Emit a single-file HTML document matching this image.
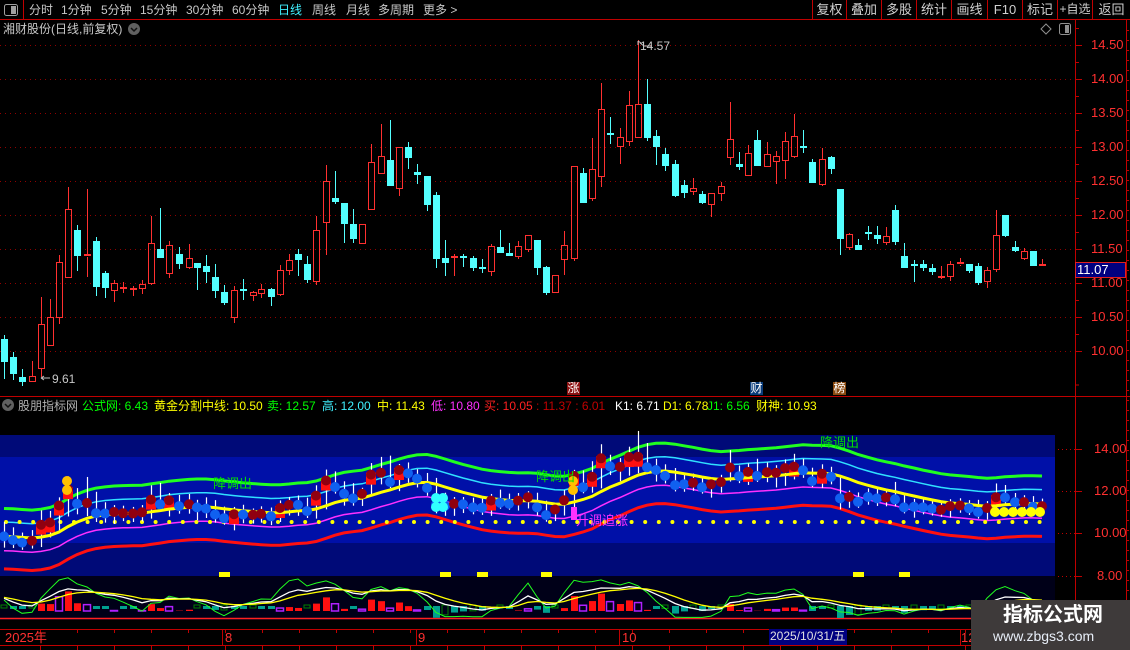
<!DOCTYPE html>
<html><head><meta charset="utf-8">
<style>
*{margin:0;padding:0;box-sizing:border-box}
body{width:1130px;height:650px;background:#000;overflow:hidden;position:relative;font-family:"Liberation Sans","Noto Sans CJK SC",sans-serif;font-size:12px;color:#c8c8c8}
.t{position:absolute;white-space:nowrap;line-height:14px}
svg{position:absolute;left:0;top:0}
.btn{position:absolute;top:0;height:20px;line-height:19px;text-align:center;border-left:1px solid #c00000;color:#d0d0d0;font-size:13px}
.ax{font-size:13px;color:#ff3030}
</style></head><body>
<svg id="s" width="1130" height="650"></svg>

<div class="t" style="left:29px;top:3px">分时</div>
<div class="t" style="left:61px;top:3px">1分钟</div>
<div class="t" style="left:101px;top:3px">5分钟</div>
<div class="t" style="left:140px;top:3px">15分钟</div>
<div class="t" style="left:186px;top:3px">30分钟</div>
<div class="t" style="left:232px;top:3px">60分钟</div>
<div class="t" style="left:278px;top:3px;color:#40f0ff">日线</div>
<div class="t" style="left:312px;top:3px">周线</div>
<div class="t" style="left:346px;top:3px">月线</div>
<div class="t" style="left:378px;top:3px">多周期</div>
<div class="t" style="left:423px;top:3px">更多 &gt;</div>

<div class="btn" style="left:812px;width:34px">复权</div>
<div class="btn" style="left:846px;width:35px">叠加</div>
<div class="btn" style="left:881px;width:35px">多股</div>
<div class="btn" style="left:916px;width:35px">统计</div>
<div class="btn" style="left:951px;width:36px">画线</div>
<div class="btn" style="left:987px;width:35px">F10</div>
<div class="btn" style="left:1022px;width:35px">标记</div>
<div class="btn" style="left:1057px;width:35px;font-size:12px">+自选</div>
<div class="btn" style="left:1092px;width:38px">返回</div>

<div class="t" style="left:3px;top:22px">湘财股份(日线,前复权)</div>
<div class="t" style="left:640px;top:39px">14.57</div>
<div class="t" style="left:52px;top:372px">9.61</div>

<div class="t" style="left:18px;top:399px;color:#b0b0b0">股朋指标网</div>
<div class="t" style="left:82px;top:399px;color:#00ff00">公式网: 6.43</div>
<div class="t" style="left:154px;top:399px;color:#ffff00">黄金分割中线: 10.50</div>
<div class="t" style="left:267px;top:399px;color:#00ff00">卖: 12.57</div>
<div class="t" style="left:322px;top:399px;color:#40f0ff">高: 12.00</div>
<div class="t" style="left:377px;top:399px;color:#ffff00">中: 11.43</div>
<div class="t" style="left:431px;top:399px;color:#ff30ff">低: 10.80</div>
<div class="t" style="left:484px;top:399px;color:#ff2020">买: 10.05 <span style="color:#c00000">: 11.37 : 6.01</span></div>
<div class="t" style="left:615px;top:399px;color:#fff">K1: 6.71</div>
<div class="t" style="left:663px;top:399px;color:#ffff00">D1: 6.78</div>
<div class="t" style="left:707px;top:399px;color:#00ff00">J1: 6.56</div>
<div class="t" style="left:756px;top:399px;color:#ffff00">财神: 10.93</div>

<div class="t" style="left:213px;top:477px;color:#00e000;font-size:13px">降调出</div>
<div class="t" style="left:536px;top:470px;color:#00e000;font-size:13px">降调出</div>
<div class="t" style="left:820px;top:436px;color:#00e000;font-size:13px">降调出</div>
<div class="t" style="left:576px;top:514px;color:#ff30ff;font-size:13px">升调追涨</div>

<div class="t ax" style="left:1091px;top:38px">14.50</div>
<div class="t ax" style="left:1091px;top:72px">14.00</div>
<div class="t ax" style="left:1091px;top:106px">13.50</div>
<div class="t ax" style="left:1091px;top:140px">13.00</div>
<div class="t ax" style="left:1091px;top:174px">12.50</div>
<div class="t ax" style="left:1091px;top:208px">12.00</div>
<div class="t ax" style="left:1091px;top:242px">11.50</div>
<div class="t ax" style="left:1091px;top:276px">11.00</div>
<div class="t ax" style="left:1091px;top:310px">10.50</div>
<div class="t ax" style="left:1091px;top:344px">10.00</div>
<div style="position:absolute;left:1075px;top:262px;width:51px;height:16px;background:#000080;border:1px solid #e02020;color:#fff;line-height:14px;padding-left:1px;font-size:13px">11.07</div>

<div class="t ax" style="left:1094px;top:442px">14.00</div>
<div class="t ax" style="left:1094px;top:484px">12.00</div>
<div class="t ax" style="left:1094px;top:526px">10.00</div>
<div class="t ax" style="left:1097px;top:569px">8.00</div>

<div style="position:absolute;left:567px;top:382px;width:13px;height:13px;background:#8b1010;color:#fff;font-size:12px;line-height:13px;text-align:center">涨</div>
<div style="position:absolute;left:750px;top:382px;width:13px;height:13px;background:#0a3c7a;color:#fff;font-size:12px;line-height:13px;text-align:center">财</div>
<div style="position:absolute;left:833px;top:382px;width:13px;height:13px;background:#8b4a10;color:#fff;font-size:12px;line-height:13px;text-align:center">榜</div>

<div class="t ax" style="left:5px;top:631px">2025年</div>
<div class="t ax" style="left:225px;top:631px">8</div>
<div class="t ax" style="left:418px;top:631px">9</div>
<div class="t ax" style="left:622px;top:631px">10</div>
<div style="position:absolute;left:769px;top:629px;width:78px;height:16px;background:#000080;color:#e0e0e0;line-height:15px;padding-left:1px;white-space:nowrap;overflow:hidden;font-size:12px">2025/10/31/五</div>
<div class="t ax" style="left:961px;top:631px">12</div>

<div style="position:absolute;left:971px;top:600px;width:159px;height:50px;background:#3e3a3a"></div>
<div class="t" style="left:1003px;top:603px;color:#fff;font-size:20px;font-weight:bold;line-height:24px">指标公式网</div>
<div class="t" style="left:993px;top:628px;color:#e8eef8;font-size:14px;line-height:16px">www.zbgs3.com</div>

<script>
var D=[[4,339,362,335,379,'c'],[13,357,374,352,380,'c'],[22,377,382,369,386,'c'],[32,376,382,361,382,'r'],[41,324,369,297,377,'r'],[50,317,346,299,346,'r'],[59,262,318,255,324,'r'],[68,209,278,187,278,'r'],[77,230,256,225,271,'c'],[87,254,257,189,277,'r'],[96,241,287,237,296,'c'],[105,273,288,271,298,'c'],[114,283,291,280,302,'r'],[123,287,289,282,293,'r'],[133,288,290,286,296,'r'],[142,284,289,280,294,'r'],[151,243,284,216,285,'r'],[160,249,258,208,258,'c'],[169,245,274,241,278,'r'],[179,254,264,247,269,'c'],[189,258,268,244,269,'r'],[197,263,268,263,290,'c'],[206,266,272,255,283,'c'],[215,277,291,264,298,'c'],[224,292,303,285,305,'c'],[234,290,318,286,323,'r'],[243,289,291,279,300,'c'],[253,292,296,291,301,'r'],[261,289,294,284,298,'r'],[271,289,297,288,306,'c'],[280,270,295,265,296,'r'],[289,260,271,254,275,'r'],[298,254,260,249,276,'c'],[307,264,280,256,283,'c'],[316,230,282,216,285,'r'],[326,181,223,165,255,'r'],[335,198,202,171,204,'c'],[344,203,224,203,243,'c'],[353,224,239,209,243,'c'],[362,224,244,224,244,'r'],[371,162,210,144,210,'r'],[381,156,174,124,174,'r'],[390,160,186,120,186,'c'],[399,147,189,147,196,'r'],[408,147,158,142,169,'c'],[417,172,175,164,184,'c'],[427,176,205,176,211,'c'],[436,195,259,192,268,'c'],[445,258,263,240,276,'c'],[454,256,258,254,276,'r'],[463,256,258,254,267,'c'],[473,258,268,256,271,'c'],[482,267,269,259,273,'c'],[491,246,272,244,276,'r'],[500,247,253,230,253,'c'],[509,253,256,243,256,'c'],[518,246,257,241,259,'r'],[528,235,250,235,252,'r'],[537,240,268,240,275,'c'],[546,267,293,266,295,'c'],[555,275,293,275,293,'r'],[564,245,260,231,275,'r'],[574,166,259,166,261,'r'],[583,173,203,168,203,'c'],[592,169,199,138,201,'r'],[601,109,177,83,187,'r'],[610,133,135,117,144,'c'],[620,137,147,128,164,'r'],[629,105,142,91,146,'r'],[638,104,138,40,138,'r'],[647,104,138,79,141,'c'],[656,136,147,130,165,'c'],[665,154,166,148,171,'c'],[675,164,196,160,197,'c'],[684,185,193,180,198,'c'],[693,188,192,178,195,'r'],[702,194,203,191,204,'c'],[711,193,205,193,217,'r'],[721,186,194,182,201,'r'],[730,139,158,102,165,'r'],[739,164,167,152,170,'c'],[748,153,176,145,176,'r'],[757,140,166,130,166,'c'],[767,154,167,142,167,'r'],[776,156,162,151,184,'r'],[785,141,161,132,179,'r'],[794,136,157,114,158,'r'],[803,146,148,130,153,'c'],[812,162,183,159,183,'c'],[822,159,185,148,186,'r'],[831,157,169,156,174,'c'],[840,189,239,189,255,'c'],[849,234,248,233,250,'r'],[858,245,250,239,250,'c'],[868,232,234,226,240,'c'],[877,235,239,226,244,'c'],[886,236,243,227,245,'r'],[895,210,242,205,245,'c'],[904,256,268,243,268,'c'],[914,264,266,260,282,'c'],[923,264,268,260,271,'c'],[932,268,272,264,275,'c'],[941,276,278,266,279,'r'],[950,264,277,261,281,'r'],[960,262,265,258,266,'r'],[969,264,271,264,273,'c'],[978,266,283,263,285,'c'],[987,270,282,267,288,'r'],[996,235,270,210,272,'r'],[1005,215,236,215,237,'c'],[1015,247,251,241,252,'c'],[1024,251,259,248,260,'r'],[1033,251,266,251,266,'c'],[1042,264,266,259,266,'r']];
var h=[];
function R(x,y,w,hh,f){h.push('<rect x="'+x+'" y="'+y+'" width="'+w+'" height="'+hh+'" fill="'+f+'"/>');}
function L(x1,y1,x2,y2,c,w,da){h.push('<line x1="'+x1+'" y1="'+y1+'" x2="'+x2+'" y2="'+y2+'" stroke="'+c+'" stroke-width="'+(w||1)+'"'+(da?' stroke-dasharray="'+da+'"':'')+'/>');}
function P(pts,c,w){h.push('<polyline fill="none" stroke="'+c+'" stroke-width="'+w+'" points="'+pts.map(function(p){return p[0]+','+p[1].toFixed(1)}).join(' ')+'"/>');}
L(0,19.5,1130,19.5,'#c00000');L(23.5,0,23.5,19,'#c00000');
L(1075.5,20,1075.5,630,'#c00000');L(1126.5,20,1126.5,650,'#c00000');
L(0,396.5,1130,396.5,'#c00000');L(0,629.5,1130,629.5,'#c00000');L(0,645.5,1130,645.5,'#c00000');
h.push('<rect x="4.5" y="4.5" width="13" height="11" rx="2" fill="none" stroke="#a0a0a0"/><rect x="11" y="6" width="5" height="8" fill="#a0a0a0"/>');
h.push('<circle cx="134" cy="29" r="6" fill="#606060"/><path d="M131 28l3 3 3-3" stroke="#111" fill="none" stroke-width="1.5"/>');
h.push('<circle cx="8" cy="405" r="6" fill="#606060"/><path d="M5 404l3 3 3-3" stroke="#111" fill="none" stroke-width="1.5"/>');
h.push('<path d="M1046 24l5 5-5 5-5-5z" fill="none" stroke="#909090"/><rect x="1059.5" y="23.5" width="11" height="11" rx="2" fill="none" stroke="#909090"/><rect x="1065" y="25" width="4" height="8" fill="#909090"/>');
for(var k=0;k<=9;k++){var y=351-k*34+0.5;L(0,y,1075,y,'#900000',1,'1 4');L(1075,y,1082,y,'#c00000');L(1075,y-17,1079,y-17,'#c00000');}
L(1075,385,1079,385,'#c00000');
[449,491,533,576].forEach(function(y){L(1058,y+.5,1075,y+.5,'#c00000',1,'1 3');L(1075,y+.5,1082,y+.5,'#c00000');});
for(var y=30;y<640;y+=10){L(1126,y+.5,1129,y+.5,'#c00000');}
[222,416,619,770,960].forEach(function(x){L(x+.5,630,x+.5,645,'#c00000');});
for(var x=40;x<1075;x+=37){L(x+.5,645,x+.5,650,'#c00000');L(x+.5,630,x+.5,633,'#c00000');}
D.forEach(function(d){var x=d[0];
 if(d[5]=='c'){L(x+.5,d[3],x+.5,d[4],'#54ffff');R(x-3,d[1],7,Math.max(2,d[2]-d[1]),'#54ffff');}
 else{L(x+.5,d[3],x+.5,d[1],'#ff3030');L(x+.5,d[2],x+.5,d[4],'#ff3030');
  if(d[2]-d[1]<=3){R(x-3,d[1],7,2,'#ff3030');}else h.push('<rect x="'+(x-2.5)+'" y="'+(d[1]+.5)+'" width="6" height="'+(d[2]-d[1]-1)+'" fill="none" stroke="#ff3030"/>');}
});
h.push('<path d="M41 378h9M41 378l3-2M41 378l3 2" stroke="#c0c0c0" fill="none"/><path d="M638 41v4M638 41l3 2M640 43l4 3h8" stroke="#c0c0c0" fill="none"/>');
R(0,435,1055,141,'#000a78');R(0,457,1055,86,'#0010a8');R(0,576,1055,44,'#000018');
var pc=D.map(function(d){return 10+(351-(d[5]=='r'?d[1]:d[2]))/68;});
var ph=D.map(function(d){return 10+(351-d[3])/68;}),pl=D.map(function(d){return 10+(351-d[4])/68;});
function iy(p){return 533-(p-10)*21;}
var e=[],v=pc[0];pc.forEach(function(p){v+=(p-v)*0.22;e.push(v);});
var e2=[];v=e[0];e.forEach(function(p){v+=(p-v)*0.4;e2.push(v);});
function line(off,c,w){P(D.map(function(d,i){return [d[0],iy(e2[i]+off)];}),c,w);}
line(-1.55,'#ff1010',3);line(-0.68,'#ff30ff',1.5);line(0.68,'#30e0ff',1.5);line(1.33,'#20ff20',3);
for(var x=6;x<1050;x+=13.6){h.push('<circle cx="'+x.toFixed(1)+'" cy="522" r="2" fill="#ffff00"/>');}
D.forEach(function(d,i){var x=d[0],y=iy(pc[i]);
 L(x+.5,iy(ph[i])-6,x+.5,iy(pl[i])+6,'#ffffff',1.2);
 if(d[5]=='r'&&d[2]-d[1]>20)R(x-5,y-2,10,12,'#ff1010');});
line(0,'#ffff00',3);
D.forEach(function(d,i){var x=d[0],y=iy(pc[i]);
 h.push('<circle cx="'+x+'" cy="'+y.toFixed(1)+'" r="5" fill="'+(d[5]=='r'?'#900010':'#1060f0')+'"/>');});
[995,1004,1013,1022,1031,1040].forEach(function(x){h.push('<circle cx="'+x+'" cy="512" r="5" fill="#ffff00"/>');});
[67,573].forEach(function(x){h.push('<circle cx="'+x+'" cy="481" r="5" fill="#ffc000"/><circle cx="'+x+'" cy="490" r="5" fill="#ffc000"/>');});
[436,443].forEach(function(x){h.push('<circle cx="'+x+'" cy="498" r="5" fill="#30ffff"/><circle cx="'+x+'" cy="507" r="5" fill="#30ffff"/>');});
R(571,507,6,13,'#ff30ff');
[219,440,477,541,853,899].forEach(function(x){R(x,572,11,5,'#ffff00');});
var K=[],Dd=[],J=[],kv=50,dv=50;
pc.forEach(function(p,i){var lo=1e9,hi=-1e9;for(var j=Math.max(0,i-8);j<=i;j++){lo=Math.min(lo,pl[j]);hi=Math.max(hi,ph[j]);}
 var rsv=hi>lo?(p-lo)/(hi-lo)*100:50;kv=kv*2/3+rsv/3;dv=dv*2/3+kv/3;K.push(kv);Dd.push(dv);J.push(3*kv-2*dv);});
function ky(v){return 614-Math.max(-10,Math.min(110,v))*0.34;}
L(0,618.5,1055,618.5,'#ff2020',1.5);
D.forEach(function(d,i){var x=d[0],m=(pc[i]-e[i])*14;
 if(m>0){var hh=Math.min(22,m);if(i%3==0)h.push('<rect x="'+(x-3.5)+'" y="'+(611-hh)+'" width="7" height="'+hh+'" fill="none" stroke="#b020ff" stroke-width="1.5"/>');else R(x-3,611-hh,7,hh,'#ff1010');}
 else{var hh=Math.min(12,-m);if(i%3==0)h.push('<rect x="'+(x-3)+'" y="605" width="6" height="'+Math.max(3,hh)+'" fill="none" stroke="#008000"/>');else R(x-3,606,7,Math.max(3,hh),'#00a090');}
});
P(D.map(function(d,i){return [d[0],ky(J[i])];}),'#20ff20',1);
P(D.map(function(d,i){return [d[0],ky(K[i])];}),'#ffffff',1.3);
P(D.map(function(d,i){return [d[0],ky(Dd[i])];}),'#ffff00',1.3);
document.getElementById('s').innerHTML=h.join('');
</script>
</body></html>
